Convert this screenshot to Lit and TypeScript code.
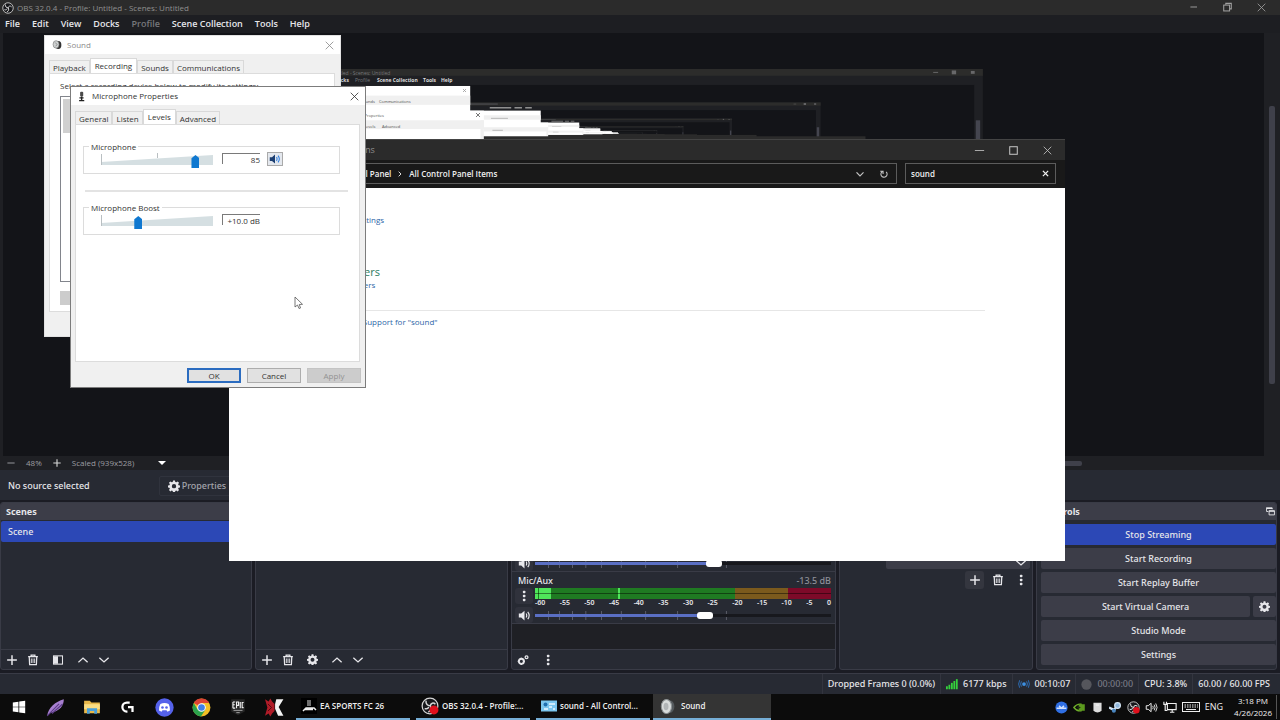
import { LitElement, html, svg, css, nothing, type TemplateResult } from "lit";
import { customElement, property } from "lit/decorators.js";
import { classMap } from "lit/directives/class-map.js";

const ic = (size: number, body: unknown, box = 16) =>
  html`<svg class="ic" width=${size} height=${size} viewBox="0 0 ${box} ${box}" aria-hidden="true">${body}</svg>`;

const line = (d: string, w = 1.5) =>
  svg`<path d=${d} fill="none" stroke="currentColor" stroke-width=${w} stroke-linecap="square"/>`;

const gearBody = svg`<path fill="currentColor" fill-rule="evenodd" d="M6.7 0.5h2.6l.4 2 1.4.6 1.7-1.2 1.9 1.9-1.2 1.7.6 1.4 2 .4v2.6l-2 .4-.6 1.4 1.2 1.7-1.9 1.9-1.7-1.2-1.4.6-.4 2H6.700l-.4-2-1.400-.6-1.700 1.200-1.900-1.900 1.200-1.700-.6-1.400-2-.4V7.300l2-.4.6-1.400L1.300 3.800l1.900-1.900 1.700 1.200 1.400-.6zM8 5.300a2.900 2.900 0 1 0 0 5.800a2.900 2.900 0 1 0 0-5.800z"/>`;
const plus = ic(12, line("M8 2.500V13.500M2.500 8H13.500", 2));
const minus = ic(10, line("M3 8H13", 1.5));
const gear = ic(11, gearBody);
const up = ic(12, line("M2.500 10.500L8 5.500L13.500 10.500", 1.800));
const down = ic(12, line("M2.500 5.500L8 10.500L13.500 5.500", 1.800));
const dots = ic(12, svg`<g fill="currentColor"><rect x="6.500" y="1" width="3.400" height="3.400" rx="1"/><rect x="6.500" y="6.300" width="3.400" height="3.400" rx="1"/><rect x="6.500" y="11.600" width="3.400" height="3.400" rx="1"/></g>`);
const trash = ic(12, svg`<path d="M1.500 3.500H14.500M5.500 3V1.500H10.500V3M3 4L3.500 14.300H12.500L13 4" fill="none" stroke="currentColor" stroke-width="1.700"/><path d="M5.800 6V12M8 6V12M10.200 6V12" stroke="currentColor" stroke-width="1.200"/>`);
const filter = ic(12, svg`<rect x="2" y="2.500" width="12" height="11" fill="none" stroke="currentColor" stroke-width="1.400"/><rect x="2.500" y="3" width="5.500" height="10" fill="currentColor"/>`);
const gears = ic(12, svg`<circle cx="5.800" cy="9.800" r="3.400" fill="none" stroke="currentColor" stroke-width="2.600"/><path d="M5.800 5v2M5.800 12.500v2M1 9.800h2M8.600 9.800h2" stroke="currentColor" stroke-width="1.800"/><circle cx="12.700" cy="4.300" r="1.900" fill="none" stroke="currentColor" stroke-width="1.700"/>`);
const speaker = ic(13, svg`<path d="M1 5.500H4L8 2V14L4 10.500H1Z" fill="currentColor"/><path d="M10 5.500Q11.500 8 10 10.500M12 3.500Q15.500 8 12 12.500" fill="none" stroke="currentColor" stroke-width="1.400"/>`);
const speakerOutline = ic(13, svg`<path d="M1.500 5.800H4L7.500 2.800V13.200L4 10.200H1.500Z" fill="none" stroke="currentColor" stroke-width="1.200"/><path d="M9.500 6Q10.700 8 9.500 10M11.300 4.500Q13.500 8 11.300 11.500M13.200 3Q16.500 8 13.200 13" fill="none" stroke="currentColor" stroke-width="1.100"/>`);
const cross = ic(11, line("M3 3L13 13M13 3L3 13", 1.200));
const obsMark = (size: number, rec = false) => ic(size, svg`
  <circle cx="8" cy="8" r="7" fill="#17181b" stroke="#d6d6d6" stroke-width="1.100"/>
  <path d="M4.500 3.300C4 6 6 8 8.300 7.700M12.800 6.500C11 4.600 8.700 5.400 8.300 7.700M6.500 13.300C8.800 12.500 9.500 10 8.300 7.700M3.200 10.300C5.500 11 6.500 10 6.900 8.800" fill="none" stroke="#d6d6d6" stroke-width="1.300"/>
  ${rec ? svg`<circle cx="11.500" cy="11.500" r="4" fill="#e0101c"/>` : nothing}`);
const horn = (size: number) => ic(size, svg`<ellipse cx="10" cy="8" rx="4.500" ry="6" fill="#555a5d"/><ellipse cx="7" cy="8" rx="4.800" ry="6.600" fill="#d9dcdc" stroke="#8d9294"/><ellipse cx="6.600" cy="8" rx="2.300" ry="3.500" fill="#b1b5b7"/>`);
const hornDark = ic(10, svg`<ellipse cx="10" cy="8" rx="5" ry="6.500" fill="#333"/><ellipse cx="6.500" cy="7" rx="4.800" ry="6" fill="#cfd2d2" stroke="#777"/><path d="M5 4L8 7L6 10" stroke="#666" fill="none"/>`);
const mic = ic(11, svg`<rect x="6" y="1" width="4.500" height="7" rx="1.500" fill="#4a4a4a"/><path d="M8.200 8V13M4.500 14H12M5 10H11" stroke="#222" stroke-width="2"/>`);

const shared = css`
  * { box-sizing: border-box; }
  :host { font-family: "Open Sans", "Noto Sans", sans-serif; font-size: 9px; line-height: 12px; }
  button, input, select { font: inherit; color: inherit; margin: 0; padding: 0; border: 0; background: none; border-radius: 0; }
  .ic { display: block; flex: none; }
  input[type="range"] { appearance: none; width: 100%; min-width: 0; outline: none; }
`;

/* Edges of the captured desktop inside the preview: each level repeats the one above it. */
const SX = 0.546, SY = 0.484, OX = 284, OY = 69;
function level(n: number): { x: (v: number) => number; y: (v: number) => number; w: (v: number) => number; h: (v: number) => number } {
  const x = (v: number) => { for (let i = 0; i < n; i++) v = OX + v * SX; return v; };
  const y = (v: number) => { for (let i = 0; i < n; i++) v = OY + v * SY; return v; };
  return { x, y, w: (v) => v * SX ** n, h: (v) => v * SY ** n };
}

@customElement("desktop-preview")
class DesktopPreview extends LitElement {
  static styles = [shared, css`
    :host { display: block; height: 100%; }
    .view { display: block; width: 100%; height: 100%; }
    .menu { font-size: 5px; font-weight: 700; fill: #dcdcdc; }
    .dim { fill: #77787c; font-weight: 400; }
    .tab { font-size: 4px; fill: #4c4c4c; }
  `];
  private rect(l: ReturnType<typeof level>, x: number, y: number, w: number, h: number, fill: string) {
    return svg`<rect x=${l.x(x)} y=${l.y(y)} width=${l.w(w)} height=${l.h(h)} fill=${fill}/>`;
  }
  private layer(n: number): TemplateResult {
    const l = level(n);
    const r = (x: number, y: number, w: number, h: number, f: string) => this.rect(l, x, y, w, h, f);
    return svg`
      ${r(0, 0, 1280, 720, "#1f2024")}
      ${r(0, 0, 1280, 14, "#2c2c2b")}
      ${r(3, 33, 1261, 424, "#131418")}
      ${r(1267, 106, 8, 279, "#44454f")}
      ${n > 1 ? svg`${r(170, 20, 72, 6, "#9a9a9a")}${r(253, 20, 25, 6, "#9a9a9a")}${r(289, 20, 22, 6, "#9a9a9a")}${r(90, 5, 107, 4, "#55565a")}` : nothing}
      ${r(1189, 6, 9, 2, "#68686a")}${r(1223, 3, 8, 8, "#68686a")}${r(1258, 4, 7, 6, "#68686a")}
      ${n < 6 ? this.layer(n + 1) : nothing}
      ${r(44, 35, 297, 302, "#ffffff")}${r(44, 55, 297, 19, "#f0f0f0")}
      ${r(70, 86, 296, 302, "#ffffff")}${r(70, 106, 296, 18, "#f0f0f0")}${r(360, 106, 6, 282, "#f0f0f0")}
      ${n > 1 ? svg`${r(174, 66, 57, 4, "#b5b5b5")}${r(179, 117, 35, 4, "#b5b5b5")}` : nothing}
      ${r(366, 139, 699, 22, "#2b2b2b")}${r(366, 161, 699, 27, "#191919")}`;
  }
  render() {
    return html`<svg class="view" aria-label="Preview">
      <g transform="translate(-3,-33)">
        ${svg`${this.layer(1)}
        <text class="menu dim" x="330" y="74.500">Untitled - Scenes: Untitled</text>
        <text class="menu" x="334" y="82">Docks</text>
        <text class="menu dim" x="355" y="82">Profile</text>
        <text class="menu" x="377" y="82">Scene Collection</text>
        <text class="menu" x="423" y="82">Tools</text>
        <text class="menu" x="441" y="82">Help</text>
        <text class="tab" x="361" y="103">Sounds</text><text class="tab" x="379" y="103">Communications</text>
        <text class="tab" x="341" y="117">Microphone Properties</text>
        <text class="tab" x="364" y="128">Levels</text><text class="tab" x="382" y="128">Advanced</text>
        <path d="M463 89L466 92M466 89L463 92" stroke="#999" stroke-width=".8"/>
        <path d="M476 113L480 117M480 113L476 117" stroke="#555" stroke-width=".8"/>`}
      </g></svg>`;
  }
}

@customElement("mixer-strip")
class MixerStrip extends LitElement {
  @property() name = "";
  @property() db = "";
  @property({ type: Number }) level = 50;
  static styles = [shared, css`
    :host { display: grid; grid-template-columns: 18px 1fr; column-gap: 2px; padding: 2px 4px 0 3px; border-bottom: 1px solid #393b46; color: #e8e8ec; font-family: "Noto Sans", "Open Sans", sans-serif; }
    .head { grid-column: 1 / 3; display: flex; justify-content: space-between; padding-left: 3px; height: 14px; align-items: center; }
    .db { color: #8e9099; }
    .mini { width: 18px; height: 16px; border-radius: 3px; background: #30323c; display: grid; place-items: center; }
    .bars { height: 11px; display: block; width: 100%; }
    .nums { display: flex; justify-content: space-between; font-size: 7px; font-weight: 600; line-height: 8px; }
    .fader { display: grid; align-items: center; height: 16px; }
    .fader > * { grid-area: 1 / 1; }
    .ticks { width: 100%; height: 9px; }
    input { height: 9px; background: none; }
    input::-webkit-slider-runnable-track { height: 3px; background: linear-gradient(90deg, #5a6fc4 var(--v), #17181d var(--v)); }
    input::-webkit-slider-thumb { appearance: none; width: 16px; height: 7px; margin-top: -2px; border-radius: 3px; background: #fff; }
  `];
  render() {
    const ticks = [4.4, 8.1, 12.5, 17, 22.300, 29, 37.200, 48, 64.500];
    return html`
      <div class="head"><label for="vol">${this.name}</label><span class="db">${this.db}</span></div>
      <button class="mini" aria-label="Options">${dots}</button>
      <div>
        <svg class="bars" viewBox="0 0 296 11" preserveAspectRatio="none">
          <rect width="200" height="11" fill="#1f7a22"/><rect x="200" width="53" height="11" fill="#7b5a1d"/><rect x="253" width="43" height="11" fill="#7d0a29"/>
          <rect width="16" height="11" fill="#4fe65a"/><rect x="3" width="1" height="11" fill="#1f7a22"/><rect x="83" width="2" height="11" fill="#4fe65a"/>
          <rect y="5" width="296" height="1" fill="#000" opacity=".45"/>
        </svg>
        <div class="nums">${[-60, -55, -50, -45, -40, -35, -30, -25, -20, -15, -10, -5, 0].map((v) => html`<span>${v}</span>`)}</div>
      </div>
      <button class="mini" aria-label="Mute">${speaker}</button>
      <div class="fader">
        <svg class="ticks">${ticks.map((t) => svg`<rect x="${t}%" y="0" width="1" height="9" fill="#5a5c68"/>`)}</svg>
        <input id="vol" type="range" min="0" max="100" .value=${String(this.level)} style="--v:${this.level}%" />
      </div>`;
  }
}

@customElement("obs-app")
class ObsApp extends LitElement {
  static styles = [shared, css`
    :host { display: flex; flex-direction: column; background: #1b1c24; color: #e6e6ea; min-height: 0; font-family: "Noto Sans", "Open Sans", sans-serif; font-weight: 500; }
    .title, .menu { font-family: "Open Sans", "Noto Sans", sans-serif; }
    .title { display: flex; align-items: center; gap: 3px; height: 15px; padding: 0 13px 0 2px; background: #2b2b2b; color: #8f8f8f; font-size: 8px; }
    .caps { margin-left: auto; display: flex; gap: 23px; color: #a0a0a0; }
    .menu { display: flex; gap: 12px; height: 18px; align-items: center; padding: 0 5px; background: #1d1e22; font-weight: 600; }
    .off { color: #77787c; }
    .stage { flex: 1; min-height: 0; display: grid; grid-template: 1fr 14px / 1fr 16px; padding-left: 3px; background: #1f2024; }
    .canvas { background: #131418; min-width: 0; min-height: 0; overflow: hidden; }
    .vbar { display: flex; flex-direction: column; align-items: center; }
    .vbar::before { content: ""; flex: 73; }
    .vbar::after { content: ""; flex: 72; }
    .vthumb { flex: 279; width: 6px; background: #3f404a; border-radius: 2px; }
    .zoom { display: flex; align-items: center; color: #9c9da2; font-size: 8px; font-weight: 400; font-family: "Open Sans", "Noto Sans", sans-serif; padding: 0 3px; gap: 10px; }
    .zoom button { display: flex; align-items: center; gap: 24px; }
    .zoom .plain { color: #d6d6d6; }
    .hbar { margin-left: auto; margin-right: 179px; width: 400px; height: 5px; background: #3f404a; border-radius: 2px; }
    .source { display: flex; align-items: center; height: 32px; padding: 1px 8px 0; background: #272a33; border-bottom: 2px solid #1b1c24; }
    .props { display: flex; align-items: center; gap: 2px; margin-left: 69px; padding: 0 8px; height: 20px; border: 1px solid #30333d; color: #a3a4ab; border-radius: 2px; }
    .props svg { color: #e6e6ea; }
    .docks { display: grid; grid-template-columns: 252fr 253fr 325fr 194fr 241fr; gap: 3px; height: 168px; padding: 0 3px 0 0; }
    .dock { display: flex; flex-direction: column; background: #272a33; border: 1px solid #393b46; border-radius: 3px; min-width: 0; min-height: 0; overflow: hidden; }
    .head { display: flex; align-items: center; justify-content: space-between; flex: none; height: 17px; padding: 0 1px 0 5px; background: #3c3d48; font-weight: 700; }
    .row { flex: none; height: 21px; padding: 0 7px; margin-top: 1px; text-align: left; background: #2c48b6; border-radius: 2px; }
    .fill { flex: 1; min-height: 0; }
    .dark { background: #1f2025; }
    .tools { display: flex; align-items: center; flex: none; gap: 9px; height: 20px; padding: 0 5px; border-top: 1px solid #393b46; }
    .tools.wide { gap: 13px; }
    .gap { margin-left: 4px; }
    .trans { display: grid; grid-template-columns: 42px 1fr; align-items: center; padding: 28px 2px 0 4px; row-gap: 2px; }
    .trans label, .field input { padding-bottom: 3px; }
    .field { display: flex; justify-content: space-between; align-items: flex-end; height: 21px; padding: 0 3px 0 4px; background: #3c3d48; border-radius: 2px; }
    .field input { width: 60px; align-self: center; }
    .tbar { grid-column: 1 / 3; display: flex; justify-content: flex-end; align-items: center; gap: 4px; }
    .tbar button { display: grid; place-items: center; width: 19px; height: 18px; border-radius: 3px; }
    .tbar .lit { background: #34363f; }
    .controls { display: grid; grid-template-columns: 1fr 23px; gap: 3px; padding: 4px 0 0 4px; }
    .controls button { grid-column: 1 / 3; height: 21px; background: #3c3d48; border-radius: 2px; display: grid; place-items: center; }
    .controls .on { background: #2c48b6; }
    .controls .part { grid-column: auto; }
    .status { display: flex; justify-content: flex-end; align-items: center; height: 21px; margin-top: 3px; background: #272a33; border-top: 1px solid #393b46; padding-right: 5px; }
    .status span { display: flex; align-items: center; gap: 5px; height: 20px; padding: 0 5px; border-left: 1px solid #33353f; }
    .status .idle { color: #777984; }
  `];
  render() {
    return html`
      <header class="title">${obsMark(12)}<span>OBS 32.0.4 - Profile: Untitled - Scenes: Untitled</span>
        <span class="caps">${ic(10, line("M3 8H12", 1.500))}${ic(11, svg`<rect x="2.500" y="4.500" width="8.500" height="8.500" fill="none" stroke="currentColor" stroke-width="1.500"/><path d="M5.500 4V2H13.500V10H11.500" fill="none" stroke="currentColor" stroke-width="1.500"/>`)}${cross}</span></header>
      <nav class="menu">${["File", "Edit", "View", "Docks", "Profile", "Scene Collection", "Tools", "Help"].map((m) => html`<button class=${classMap({ off: m === "Profile" })}>${m}</button>`)}</nav>
      <section class="stage">
        <div class="canvas"><desktop-preview></desktop-preview></div>
        <div class="vbar"><div class="vthumb"></div></div>
        <div class="zoom">${minus}<span>48%</span><span class="plain">${ic(10, line("M8 3V13M3 8H13", 1.800))}</span>
          <button>Scaled (939x528)<svg width="8" height="4"><path d="M0 0H8L4 4Z" fill="#fff"/></svg></button><div class="hbar"></div></div>
      </section>
      <section class="source"><span>No source selected</span><button class="props">${ic(12, gearBody)}Properties</button></section>
      <section class="docks">
        <div class="dock"><div class="head">Scenes</div><button class="row">Scene</button><div class="fill"></div>
          <div class="tools">${plus}${trash}<span class="gap">${filter}</span><span class="gap">${up}</span>${down}</div></div>
        <div class="dock"><div class="head">Sources</div><div class="fill"></div>
          <div class="tools">${plus}${trash}<span class="gap">${gear}</span><span class="gap">${up}</span>${down}</div></div>
        <div class="dock"><div class="head">Audio Mixer</div>
          <mixer-strip name="Desktop Audio" db="-10.7 dB" level="61"></mixer-strip>
          <mixer-strip name="Mic/Aux" db="-13.5 dB" level="58"></mixer-strip>
          <div class="fill dark"></div><div class="tools wide">${gears}${dots}</div></div>
        <div class="dock"><div class="head">Scene Transitions</div>
          <div class="trans"><label for="dur">Duration</label><span class="field"><input id="dur" value="300 ms" />${down}</span>
            <div class="tbar"><button class="lit" aria-label="Add">${plus}</button><button aria-label="Remove">${trash}</button><button aria-label="More">${dots}</button></div></div></div>
        <div class="dock"><div class="head">Controls ${ic(9, svg`<path d="M1 1.500H11V4M1 1V8H4M5.500 6.500H15V14H5.500Z" fill="none" stroke="currentColor" stroke-width="1.600"/><path d="M1 2.500H11M5 7.500H15" stroke="currentColor" stroke-width="2"/>`)}</div>
          <div class="controls"><button class="on">Stop Streaming</button><button>Start Recording</button><button>Start Replay Buffer</button>
            <button class="part">Start Virtual Camera</button><button class="part" aria-label="Virtual camera settings">${gear}</button><button>Studio Mode</button><button>Settings</button></div></div>
      </section>
      <footer class="status"><span>Dropped Frames 0 (0.0%)</span>
        <span>${ic(12, svg`<g fill="#35d23c"><rect x="0" y="11" width="2.400" height="4"/><rect x="3.300" y="9" width="2.400" height="6"/><rect x="6.600" y="6.500" width="2.400" height="8.500"/><rect x="9.900" y="4" width="2.400" height="11"/><rect x="13.200" y="1.500" width="2.400" height="13.500"/></g>`)}6177 kbps</span>
        <span>${ic(12, svg`<circle cx="8" cy="8" r="2.500" fill="#3d8fe0"/><path d="M4.500 4.500Q2.500 8 4.500 11.500M11.500 4.500Q13.500 8 11.500 11.500M2.200 3Q-.5 8 2.200 13M13.800 3Q16.500 8 13.800 13" fill="none" stroke="#2d6fb8" stroke-width="1.300"/>`)}00:10:07</span>
        <span class="idle">${ic(11, svg`<circle cx="8" cy="8" r="7.500" fill="#55565c"/>`)}00:00:00</span>
        <span>CPU: 3.8%</span><span>60.00 / 60.00 FPS</span></footer>`;
  }
}

@customElement("control-panel")
class ControlPanel extends LitElement {
  static styles = [shared, css`
    :host { display: flex; flex-direction: column; background: #fff; border-top: 1px solid #444; }
    .title { display: flex; align-items: center; height: 20px; padding: 0 12px 0 17px; background: #2b2b2b; color: #8f8f8f; }
    .caps { margin-left: auto; display: flex; gap: 23px; color: #c4c4c4; }
    .bar { display: grid; grid-template-columns: 1fr 151px; gap: 8px; height: 28px; padding: 3px 9px 4px 74px; background: #191919; color: #f0f0f0; font-size: 8px; font-weight: 600; }
    .box { display: flex; align-items: center; gap: 5px; border: 1px solid #5c5c5c; min-width: 0; padding: 0 5px; }
    .box input { flex: 1; min-width: 0; }
    .ends { margin-left: auto; display: flex; gap: 14px; color: #c4c4c4; padding-right: 2px; }
    .body { display: grid; justify-items: start; padding: 26px 80px 0 62px; white-space: nowrap; font-size: 8px; }
    a { color: #2d66a8; text-decoration: none; }
    .sys { margin-left: 38px; }
    .big { font-size: 11px; line-height: 14px; color: #2b7a5e; margin: 39px 0 0 -16px; }
    .sub { margin-left: 8px; }
    .rule { justify-self: stretch; border-top: 1px solid #e6e6e6; margin: 19px 0 5px; }
  `];
  render() {
    return html`
      <header class="title"><span>sound - All Control Panel Items</span><span class="caps">${ic(11, line("M2 8H14", 1.200))}${ic(11, svg`<rect x="2.500" y="2.500" width="11" height="11" fill="none" stroke="currentColor" stroke-width="1.500"/>`)}${cross}</span></header>
      <div class="bar"><div class="box">${ic(12, svg`<rect y="2.500" width="16" height="11" fill="#7cc6ee"/>`)}${ic(8, line("M6 4L10 8L6 12", 1.800))}<span>Control Panel</span>${ic(8, line("M6 4L10 8L6 12", 1.800))}<span>All Control Panel Items</span>
        <span class="ends">${ic(10, line("M3 6L8 11L13 6", 1.800))}${ic(10, svg`<path d="M11.500 4.500A5 5 0 1 1 6 3.500M2 3.500H6.500V8" fill="none" stroke="currentColor" stroke-width="1.700"/>`)}</span></div>
        <div class="box"><input aria-label="Search" value="sound" />${ic(9, line("M4 4L12 12M12 4L4 12", 2))}</div></div>
      <main class="body"><a class="sys" href="#">Sound settings</a><a class="big" href="#">Devices and Printers</a><a class="sub" href="#">Devices and printers</a>
        <div class="rule"></div><a href="#">Windows Help and Support for "sound"</a></main>`;
  }
}

const dialogStyles = css`
  :host { display: flex; flex-direction: column; background: #f0f0f0; border: 1px solid #7c7c7c; color: #333; font-size: 8px; }
  .title { display: flex; align-items: center; gap: 5px; height: 18px; padding: 0 5px; background: #fff; }
  .title > :last-child { margin-left: auto; }
  .tabs { display: flex; align-items: flex-end; height: 20px; padding: 0 4px; margin-bottom: -1px; }
  .tabs button { height: 14px; padding: 0 3px; border: 1px solid #d9d9d9; border-bottom: 0; background: #f0f0f0; }
  .tabs .sel { height: 16px; background: #fff; padding: 0 4px 2px; }
  .page { flex: 1; min-height: 0; margin: 0 5px 0 4px; background: #fff; border: 1px solid #dcdcdc; }
`;

@customElement("sound-window")
class SoundWindow extends LitElement {
  static styles = [shared, dialogStyles, css`
    :host { border-color: #e2e2e2; }
    .title { color: #8b8b8b; padding-left: 7px; }
    .page { padding: 6px 10px; display: flex; flex-direction: column; white-space: nowrap; overflow: hidden; }
    .list { flex: 1; border: 1px solid #82858c; margin: 4px 0 9px; padding: 2px; }
    .item { height: 34px; background: #d0d0d0; }
    .cfg { width: 54px; height: 14px; padding-left: 4px; background: #ccc; color: #838383; }
    .foot { height: 24px; }
  `];
  render() {
    return html`<header class="title">${hornDark}<span>Sound</span>${cross}</header>
      <nav class="tabs">${["Playback", "Recording", "Sounds", "Communications"].map((t) => html`<button class=${classMap({ sel: t === "Recording" })}>${t}</button>`)}</nav>
      <div class="page"><span>Select a recording device below to modify its settings:</span><div class="list"><div class="item"></div></div><button class="cfg">Configure</button></div>
      <div class="foot"></div>`;
  }
}

@customElement("mic-window")
class MicWindow extends LitElement {
  static styles = [shared, dialogStyles, css`
    .page { padding: 16px 11px 0 7px; }
    fieldset { display: flex; align-items: flex-start; margin: 0 8px 0 0; padding: 0 17px 8px; border: 1px solid #dcdcdc; height: 33px; min-width: 0; }
    legend { padding: 0 2px; margin-left: -12px; line-height: 11px; }
    .slide { display: grid; width: 112px; height: 16px; align-items: end; }
    .slide > * { grid-area: 1 / 1; }
    .wedge { width: 100%; height: 15px; }
    .slide input { height: 13px; background: none; }
    .slide input::-webkit-slider-thumb { appearance: none; width: 8px; height: 13px; background: #0f78d0; clip-path: polygon(0 25%, 50% 0, 100% 25%, 100% 100%, 0 100%); }
    output { width: 38px; height: 11px; margin: 1px 7px 0 9px; border-top: 1px solid #7a7a7a; border-left: 1px solid #7a7a7a; line-height: 11px; text-align: right; }
    .spk { display: grid; place-items: center; width: 16px; height: 14px; border: 1px solid #aaa; background: #e4e8ee; color: #1a5fb4; }
    hr { border: 0; border-top: 2px solid #e3e3e3; margin: 16px 0 10px 2px; }
    .foot { display: flex; justify-content: flex-end; gap: 6px; padding: 6px 4px 4px; }
    .foot button { width: 54px; height: 15px; background: #e1e1e1; border: 1px solid #adadad; line-height: 12px; }
    .foot .main { border: 2px solid #2b6cc0; line-height: 10px; }
    .foot .dis { background: #ccc; border-color: #c4c4c4; color: #929292; }
  `];
  private slider(id: string, value: number, mid: boolean) {
    return html`<div class="slide">
      <svg class="wedge" viewBox="0 0 112 15" preserveAspectRatio="none"><path d="M0 9L112 2V12H0Z" fill="#d5dfe2"/><path d="M.5 1V12${mid ? "M56.500 0V5" : ""}" stroke="#b9bfc2" fill="none"/></svg>
      <input id=${id} type="range" aria-label=${id} min="0" max="100" .value=${String(value)} /></div>`;
  }
  render() {
    return html`<header class="title">${mic}<span>Microphone Properties</span>${cross}</header>
      <nav class="tabs">${["General", "Listen", "Levels", "Advanced"].map((t) => html`<button class=${classMap({ sel: t === "Levels" })}>${t}</button>`)}</nav>
      <div class="page">
        <fieldset><legend>Microphone</legend>${this.slider("Level", 87, true)}<output for="Level">85</output><button class="spk" aria-label="Mute">${ic(12, svg`<path d="M1 5.500H4L8 2V14L4 10.500H1Z" fill="#1c3f72"/><path d="M10 5.500Q11.500 8 10 10.500M12 3.500Q15.500 8 12 12.500" fill="none" stroke="#2f7fe0" stroke-width="1.400"/>`)}</button></fieldset>
        <hr />
        <fieldset><legend>Microphone Boost</legend>${this.slider("Boost", 32, false)}<output for="Boost">+10.0 dB</output></fieldset>
      </div>
      <div class="foot"><button class="main">OK</button><button>Cancel</button><button class="dis" disabled>Apply</button></div>`;
  }
}

@customElement("task-bar")
class TaskBar extends LitElement {
  static styles = [shared, css`
    :host { display: flex; align-items: stretch; height: 26px; background: #0c0c0c; color: #f0f0f0; }
    .pins { display: flex; align-items: center; gap: 18px; padding: 0 12px 0 10px; }
    .apps { display: flex; gap: 6px; }
    .apps button { display: flex; align-items: center; gap: 3px; width: 114px; padding: 0 5px; border-bottom: 2px solid #76aed6; white-space: nowrap; font-size: 8px; font-weight: 600; }
    .apps .act { background: #343434; width: 118px; margin-left: -3px; padding: 0 6px; gap: 5px; }
    .tray { margin-left: auto; display: flex; align-items: center; gap: 5px; padding-right: 3px; }
    .lang { margin: 0 6px 0 0; }
    .clock { font-size: 8px; line-height: 12px; text-align: center; padding-right: 4px; border-right: 1px solid #555; }
  `];
  render() {
    const pins = [
      ic(18, svg`<path d="M2.500 4L7.500 3.300V7.700H2.500ZM8.200 3.200L13.500 2.500V7.700H8.200ZM2.500 8.300H7.500V12.700L2.500 12ZM8.200 8.300H13.500V13.500L8.200 12.800Z" fill="#fff"/>`),
      ic(19, svg`<path d="M1 15C2 8 8 3 15 1C15 6 12 11 4 12.500Z" fill="#a77fd0"/><path d="M1 15L11 5M5 13L14 5" stroke="#5c3c86"/>`),
      ic(18, svg`<path d="M1 2.500H6L7.500 4H15V13.500H1Z" fill="#e8b84a"/><path d="M1 5.500H15V10H1Z" fill="#fadd83"/><path d="M3.500 14V9H12.500V14H10V11.500H6V14Z" fill="#4a9fd8"/>`),
      ic(18, svg`<path d="M9.500 4H7A4 4 0 0 0 7 12H7.500" fill="none" stroke="#fff" stroke-width="2"/><path d="M8 8H12V12.500" fill="none" stroke="#fff" stroke-width="2"/>`),
      ic(19, svg`<circle cx="8" cy="8" r="7.700" fill="#5562ea"/><path d="M4.500 5Q8 3.500 11.500 5Q13 8 12.600 10.500L10.500 11.500L9.700 10.400H6.300L5.500 11.500L3.400 10.500Q3 8 4.500 5Z" fill="#fff"/><circle cx="6.300" cy="8" r="1.100" fill="#5562ea"/><circle cx="9.700" cy="8" r="1.100" fill="#5562ea"/>`),
      ic(19, svg`<circle cx="8" cy="8" r="7.500" fill="#f2bf26"/><path d="M8 8L1.500 4.250A7.500 7.500 0 0 1 14.500 4.250H8Z" fill="#dd4335"/><path d="M8 8L4.750 9.900L1.500 4.250A7.500 7.500 0 0 0 7.500 15.500L11.250 9.900Z" fill="#2ba24c"/><circle cx="8" cy="8" r="3.600" fill="#fff"/><circle cx="8" cy="8" r="2.800" fill="#3f7fe8"/>`),
      ic(18, svg`<path d="M2 1H14V12L8 15L2 12Z" fill="#262626"/><path d="M3.500 3.500V9M3.500 3.500H5.500M3.500 6H5.200M3.500 9H5.500M6.700 9V3.500H8.500V6.500H7M10 3.500V9M13 4H11.700V8.500H13" stroke="#eee" fill="none" stroke-width="1"/><path d="M4 11H12M6.500 13H9.500" stroke="#aaa" stroke-width=".8"/>`),
      ic(19, svg`<path d="M0 1L3 3L4.500 .5L6 3L8 5L8 11L6 13L4.500 15.500L3 13L0 15L2 8Z" fill="#b01c28"/><path d="M2.500 5L5.500 8L2.500 11" stroke="#4c0a10" fill="none" stroke-width=".8"/><path d="M9.500 1H15.500L11.500 7.500L15.500 15H11L8.500 9V5Z" fill="#f4f4f4"/>`),
    ];
    const tray = [
      svg`<circle cx="8" cy="8" r="7.500" fill="#2f6fe4"/><path d="M2 9H14M5 6L8 9L11 6" stroke="#cfe0ff" stroke-width="1.800" fill="none"/>`,
      svg`<path d="M1 8Q5 3 10 4V12Q5 13 1 8Z" fill="none" stroke="#6fae2a" stroke-width="1.600"/><path d="M7 4H14.500V12H7Z" fill="#5c9a1e"/><path d="M4.500 8Q7 5.500 9.500 8Q7 10.500 4.500 8" fill="#1d2a10"/>`,
      svg`<path d="M3 2H13V12Q8 16 3 12Z" fill="#ddd"/><path d="M6 5H10" stroke="#fff"/>`,
      svg`<circle cx="10.500" cy="5.500" r="3.500" fill="#8fb7dc" stroke="#d6e6f5" stroke-width="1.500"/><path d="M0 8L6 11L8 8.500" stroke="#d6e6f5" stroke-width="3" fill="none"/><circle cx="6" cy="12" r="2.500" fill="#4a86c0"/>`,
    ];
    const apps: [string, TemplateResult, boolean][] = [
      ["EA SPORTS FC 26", ic(16, svg`<rect width="16" height="16" fill="#000"/><path d="M6 3H10M6 5H10M6 7H10" stroke="#ddd"/><path d="M2 13L5 10H13L15 12M4 11.500H12" stroke="#eee" stroke-width="1.500" fill="none"/>`), false],
      ["OBS 32.0.4 - Profile:...", obsMark(18, true), false],
      ["sound - All Control...", ic(16, svg`<rect y="2.500" width="16" height="11" fill="#7cc6ee"/><circle cx="4.500" cy="6.500" r="2" fill="#1f6fb0"/><path d="M8 6H14M8 9H11M3 11H7M12 11H14" stroke="#eaf7ff" stroke-width="1.400"/>`), false],
      ["Sound", horn(17), true],
    ];
    return html`<div class="pins">${pins}</div>
      <div class="apps">${apps.map(([t, i, a]) => html`<button class=${classMap({ act: a })}>${i}${t}</button>`)}</div>
      <div class="tray">${tray.map((t) => ic(13, t))}${obsMark(13, true)}${speakerOutline}
        ${ic(14, svg`<path d="M5 4H15V11H5ZM8 14H13M10.500 11V14M1 2V5H4V2M2.500 5V12H5" fill="none" stroke="currentColor" stroke-width="1.300"/>`)}
        <svg class="ic" width="18" height="11" viewBox="0 0 18 11"><rect x=".5" y=".5" width="17" height="9" fill="none" stroke="#eee"/><path d="M2.500 3H16M2.500 5H16" stroke="#eee" stroke-dasharray="1.500 1"/><path d="M4 7.500H14" stroke="#eee"/></svg>
        <span class="lang">ENG</span><div class="clock">3:18 PM<br />4/26/2026</div></div>`;
  }
}

@customElement("app-root")
class AppRoot extends LitElement {
  static styles = [shared, css`
    :host { display: flex; flex-direction: column; height: 100vh; overflow: hidden; position: relative; background: #1b1c24; }
    obs-app { flex: 1; }
    .win { position: absolute; }
    .panel { left: 229px; top: 139px; width: 836px; height: 422px; }
    .sound { left: 44px; top: 35px; width: 297px; height: 302px; }
    .mic { left: 70px; top: 86px; width: 296px; height: 302px; }
    .cursor { position: absolute; left: 294px; top: 296px; }
  `];
  render() {
    return html`<obs-app></obs-app>
      <control-panel class="win panel"></control-panel>
      <sound-window class="win sound"></sound-window>
      <mic-window class="win mic"></mic-window>
      <svg class="cursor" width="10" height="14" viewBox="0 0 10 14"><path d="M1 1V11L3.500 9L5 12.500L6.500 12L5.300 8.500L8.500 8.300Z" fill="#fff" stroke="#555" stroke-width=".8"/></svg>
      <task-bar></task-bar>`;
  }
}
